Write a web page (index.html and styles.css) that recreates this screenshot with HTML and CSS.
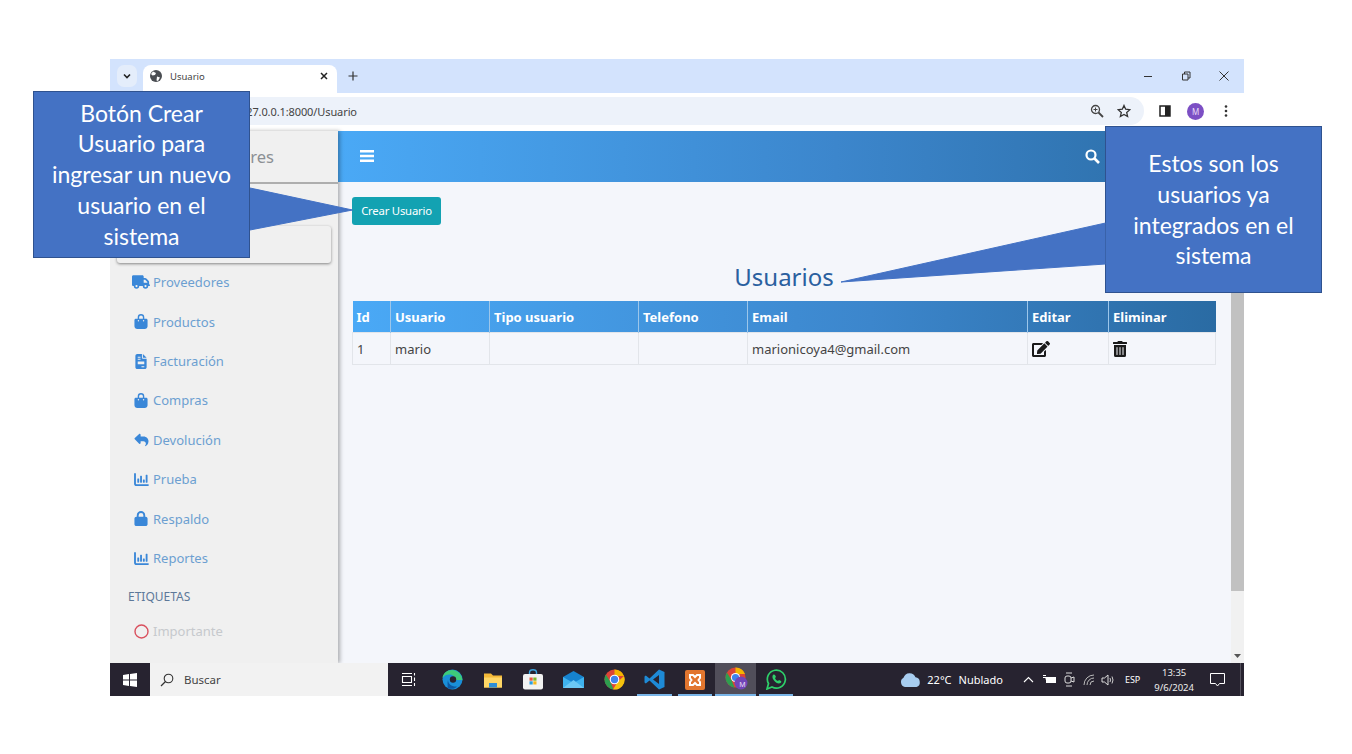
FILE: index.html
```html
<!DOCTYPE html>
<html lang="es">
<head>
<meta charset="utf-8">
<title>Usuario</title>
<link rel="stylesheet" href="styles.css">
</head>
<body>
<div class="window">
  <div class="tabstrip">
    <div class="tab-menu"><svg width="10" height="10" viewBox="0 0 10 10"><path d="M2 3.5 5 6.5 8 3.5" fill="none" stroke="#222" stroke-width="1.6"/></svg></div>
    <div class="tab">
      <svg class="globe" width="12" height="12" viewBox="0 0 12 12"><circle cx="6" cy="6" r="6" fill="#4a4d52"/><path d="M3 1.5 6 3 5 5 2.5 5.5 1 4ZM7 6.5 10 7.5 8 11 6.5 10.5Z" fill="#fff"/></svg>
      <span class="tab-title">Usuario</span>
      <svg class="tab-close" width="8" height="8" viewBox="0 0 8 8"><path d="M1 1 7 7M7 1 1 7" stroke="#222" stroke-width="1.5"/></svg>
    </div>
    <svg class="newtab" width="10" height="10" viewBox="0 0 10 10"><path d="M5 .5V9.500M.5 5H9.500" stroke="#333" stroke-width="1.2"/></svg>
    <div class="winctl">
      <svg width="10" height="10" viewBox="0 0 10 10"><path d="M1 5.500H9" stroke="#333" stroke-width="1"/></svg>
      <svg width="10" height="10" viewBox="0 0 10 10"><path d="M1.500 3H7V9H1.500ZM3.500 3V1H9V7H7" fill="none" stroke="#333" stroke-width="1"/></svg>
      <svg width="10" height="10" viewBox="0 0 10 10"><path d="M.5 .5 9.500 9.500M9.500 .5 .5 9.500" stroke="#333" stroke-width="1"/></svg>
    </div>
  </div>
  <div class="toolbar">
    <div class="omnibox">
      <span class="url">127.0.0.1:8000/Usuario</span>
      <svg class="omni-ico" width="14" height="14" viewBox="0 0 14 14"><circle cx="5.500" cy="5.500" r="4" fill="none" stroke="#444" stroke-width="1.300"/><path d="M8.500 8.500 13 13" stroke="#444" stroke-width="1.800"/><path d="M3.500 5.500H7.500M5.500 3.500V7.500" stroke="#444" stroke-width="1"/></svg>
      <svg class="omni-ico" width="14" height="14" viewBox="0 0 24 24"><path d="M12 2.500 14.900 9 22 9.700 16.600 14.400 18.200 21.500 12 17.800 5.800 21.500 7.400 14.400 2 9.700 9.100 9Z" fill="none" stroke="#333" stroke-width="2.200"/></svg>
    </div>
    <svg class="side-panel" width="12" height="12" viewBox="0 0 12 12"><rect x="1" y="1" width="10" height="10" fill="none" stroke="#222" stroke-width="1.500"/><rect x="6" y="1" width="5" height="10" fill="#222"/></svg>
    <div class="avatar">M</div>
    <svg class="dots" width="4" height="12" viewBox="0 0 4 12"><circle cx="2" cy="1.500" r="1.300" fill="#333"/><circle cx="2" cy="6" r="1.300" fill="#333"/><circle cx="2" cy="10.500" r="1.300" fill="#333"/></svg>
  </div>
  <div class="app">
    <aside class="sidebar">
      <div class="brand">Proveedores</div>
      <nav class="nav">
        <a class="nav-item active"><span class="nav-ico"></span>Usuarios</a>
        <a class="nav-item"><span class="nav-ico"><svg width="18" height="15" viewBox="0 0 640 512"><path fill="#3a87d8" d="M48 0C21 0 0 21 0 48v288c0 27 21 48 48 48h16a96 96 0 0 0 192 0h128a96 96 0 0 0 192 0h32c18 0 32-14 32-32s-14-32-32-32V237c0-17-7-33-19-45l-77-77c-12-12-28-19-45-19h-51V48c0-27-21-48-48-48zm368 160h51l77 77v27H416zM160 344a40 40 0 1 1 0 80 40 40 0 0 1 0-80zm320 0a40 40 0 1 1 0 80 40 40 0 0 1 0-80z"/></svg></span>Proveedores</a>
        <a class="nav-item"><span class="nav-ico"><svg width="14" height="15" viewBox="0 0 448 512"><path fill="#3a87d8" d="M160 112a64 64 0 0 1 128 0v48H160zm-48 48H48c-26 0-48 22-48 48v208c0 53 43 96 96 96h256c53 0 96-43 96-96V208c0-26-22-48-48-48h-64v-48a112 112 0 0 0-224 0zm24 96a24 24 0 1 1 0-48 24 24 0 0 1 0 48zm200-24a24 24 0 1 1-48 0 24 24 0 0 1 48 0z"/></svg></span>Productos</a>
        <a class="nav-item"><span class="nav-ico"><svg width="12" height="15" viewBox="0 0 384 512"><path fill="#3a87d8" d="M64 0C29 0 0 29 0 64v384c0 35 29 64 64 64h256c35 0 64-29 64-64V160H256c-18 0-32-14-32-32V0zm192 0v128h128zM80 96h96v32H80zm0 64h96v32H80zm0 96h224v96H80zm128 160h96v32h-96z"/></svg></span>Facturación</a>
        <a class="nav-item"><span class="nav-ico"><svg width="14" height="15" viewBox="0 0 448 512"><path fill="#3a87d8" d="M160 112a64 64 0 0 1 128 0v48H160zm-48 48H48c-26 0-48 22-48 48v208c0 53 43 96 96 96h256c53 0 96-43 96-96V208c0-26-22-48-48-48h-64v-48a112 112 0 0 0-224 0zm24 96a24 24 0 1 1 0-48 24 24 0 0 1 0 48zm200-24a24 24 0 1 1-48 0 24 24 0 0 1 48 0z"/></svg></span>Compras</a>
        <a class="nav-item"><span class="nav-ico"><svg width="15" height="14" viewBox="0 0 512 512"><path fill="#3a87d8" d="M205 34c11 5 19 16 19 29v65h112c97 0 176 79 176 176 0 113-81 164-100 174-3 1-5 2-8 2-10 0-18-8-18-18 0-7 4-13 9-18 9-9 21-25 21-53 0-49-39-88-88-88h-104v64c0 13-8 24-19 29s-25 3-35-6L11 229C4 223 0 215 0 206s4-17 11-23L170 40c10-9 23-11 35-6z"/></svg></span>Devolución</a>
        <a class="nav-item"><span class="nav-ico"><svg width="15" height="13" viewBox="0 0 512 448"><path fill="#3a87d8" d="M32 0c18 0 32 14 32 32v336c0 9 7 16 16 16h400c18 0 32 14 32 32s-14 32-32 32H80c-44 0-80-36-80-80V32C0 14 14 0 32 0zm96 192h32c9 0 16 7 16 16v112c0 9-7 16-16 16h-32c-9 0-16-7-16-16V208c0-9 7-16 16-16zm96-96h32c9 0 16 7 16 16v208c0 9-7 16-16 16h-32c-9 0-16-7-16-16V112c0-9 7-16 16-16zm96 128h32c9 0 16 7 16 16v80c0 9-7 16-16 16h-32c-9 0-16-7-16-16v-80c0-9 7-16 16-16zm96-160h32c9 0 16 7 16 16v240c0 9-7 16-16 16h-32c-9 0-16-7-16-16V80c0-9 7-16 16-16z"/></svg></span>Prueba</a>
        <a class="nav-item"><span class="nav-ico"><svg width="14" height="15" viewBox="0 0 448 512"><path fill="#3a87d8" d="M144 144v48h160v-48a80 80 0 0 0-160 0zm-64 48v-48a144 144 0 0 1 288 0v48h16c35 0 64 29 64 64v192c0 35-29 64-64 64H64c-35 0-64-29-64-64V256c0-35 29-64 64-64z"/></svg></span>Respaldo</a>
        <a class="nav-item"><span class="nav-ico"><svg width="15" height="13" viewBox="0 0 512 448"><path fill="#3a87d8" d="M32 0c18 0 32 14 32 32v336c0 9 7 16 16 16h400c18 0 32 14 32 32s-14 32-32 32H80c-44 0-80-36-80-80V32C0 14 14 0 32 0zm96 192h32c9 0 16 7 16 16v112c0 9-7 16-16 16h-32c-9 0-16-7-16-16V208c0-9 7-16 16-16zm96-96h32c9 0 16 7 16 16v208c0 9-7 16-16 16h-32c-9 0-16-7-16-16V112c0-9 7-16 16-16zm96 128h32c9 0 16 7 16 16v80c0 9-7 16-16 16h-32c-9 0-16-7-16-16v-80c0-9 7-16 16-16zm96-160h32c9 0 16 7 16 16v240c0 9-7 16-16 16h-32c-9 0-16-7-16-16V80c0-9 7-16 16-16z"/></svg></span>Reportes</a>
        <div class="nav-label">ETIQUETAS</div>
        <a class="nav-item muted"><span class="nav-ico"><svg width="15" height="15" viewBox="0 0 15 15"><circle cx="7.500" cy="7.500" r="6.500" fill="none" stroke="#d9505e" stroke-width="1.400"/></svg></span>Importante</a>
      </nav>
    </aside>
    <main class="main">
      <header class="topbar">
        <svg width="14" height="12" viewBox="0 0 14 12"><path d="M0 0h14v2.500H0zM0 4.700h14v2.500H0zM0 9.400h14v2.500H0z" fill="#fff"/></svg>
        <svg width="15" height="15" viewBox="0 0 15 15"><circle cx="6" cy="6" r="4.500" fill="none" stroke="#fff" stroke-width="2.200"/><path d="M9.500 9.500 14 14" stroke="#fff" stroke-width="2.600"/></svg>
      </header>
      <div class="scrollarea">
        <div class="content">
          <a class="btn-create">Crear Usuario</a>
          <h1 class="page-title">Usuarios</h1>
          <table class="users">
            <colgroup><col class="c-id"><col class="c-user"><col class="c-type"><col class="c-tel"><col class="c-mail"><col class="c-edit"><col class="c-del"></colgroup>
            <thead><tr><th>Id</th><th>Usuario</th><th>Tipo usuario</th><th>Telefono</th><th>Email</th><th>Editar</th><th>Eliminar</th></tr></thead>
            <tbody><tr>
              <td>1</td><td>mario</td><td></td><td></td><td>marionicoya4@gmail.com</td>
              <td><svg width="18" height="16" viewBox="0 0 576 512"><path fill="#1a1a1a" d="M402 83l90 90a10 10 0 0 1 0 14L274 405l-93 10a20 20 0 0 1-22-22l10-93L387 83a10 10 0 0 1 15 0zm162-23-49-49a40 40 0 0 0-56 0l-35 35a10 10 0 0 0 0 14l90 90a10 10 0 0 0 14 0l35-35a40 40 0 0 0 1-55zM384 346v102H64V128h230a12 12 0 0 0 8-4l40-40c8-8 2-20-8-20H48C21 64 0 85 0 112v352c0 27 21 48 48 48h352c27 0 48-21 48-48V306c0-11-13-16-20-9l-40 40a12 12 0 0 0-4 9z"/></svg></td>
              <td><svg width="14" height="16" viewBox="0 0 448 512"><path fill="#1a1a1a" d="M32 464a48 48 0 0 0 48 48h288a48 48 0 0 0 48-48V128H32zm272-256a16 16 0 0 1 32 0v224a16 16 0 0 1-32 0zm-96 0a16 16 0 0 1 32 0v224a16 16 0 0 1-32 0zm-96 0a16 16 0 0 1 32 0v224a16 16 0 0 1-32 0zM432 32H312l-9-19a24 24 0 0 0-22-13H167a24 24 0 0 0-21 13l-9 19H16A16 16 0 0 0 0 48v32a16 16 0 0 0 16 16h416a16 16 0 0 0 16-16V48a16 16 0 0 0-16-16z"/></svg></td>
            </tr></tbody>
          </table>
        </div>
        <div class="scrollbar"><div class="thumb"></div><svg class="arrow" width="7" height="4" viewBox="0 0 7 4"><path d="M0 0h7L3.500 4z" fill="#555"/></svg></div>
      </div>
    </main>
  </div>
  <div class="taskbar">
    <svg class="win-logo" width="14" height="14" viewBox="0 0 14 14"><path fill="#fff" d="M0 2 6 1.100V6.500H0zM7 1 14 0V6.500H7zM0 7.500H6V12.900L0 12zM7 7.500H14V14L7 13Z"/></svg>
    <div class="searchbox"><svg width="14" height="14" viewBox="0 0 14 14"><circle cx="8.500" cy="5.500" r="4.300" fill="none" stroke="#333" stroke-width="1.100"/><path d="M5.500 8.500 1 13" stroke="#333" stroke-width="1.300"/></svg><span>Buscar</span></div>
    <div class="apps">
      <div class="app-ico taskview"><svg width="15" height="15" viewBox="0 0 15 15"><path d="M1 1.500H11M1 13.500H11M1.500 4.500H10.500V10.500H1.500ZM13.500 1V3.500M13.500 5.500V9M13.500 11V14" fill="none" stroke="#fff" stroke-width="1.100"/></svg></div>
      <div class="app-ico"><svg width="21" height="21" viewBox="0 0 21 21"><circle cx="10.500" cy="10.500" r="10" fill="#1a8fd8"/><path d="M20.500 12C20.500 6 16 1 10 1 5 1 1 4 .5 9c2-3 5-4 8-3.500 3 .5 5 3 4 5.500H20z" fill="#3ecb7a"/><path d="M6 11c0 4 4 7 9 6.500-2 2.500-6 3-9.500 1.500C6 17 5 14 6 11z" fill="#0c59a4"/><circle cx="11" cy="10.500" r="3.200" fill="#272330"/></svg></div>
      <div class="app-ico"><svg width="18" height="16" viewBox="0 0 18 16"><path d="M0 1.500H7L9 3.500H18V15.500H0Z" fill="#f4b938"/><path d="M0 5.500H18V15.500H0Z" fill="#ffd766"/><path d="M5 11H13V15.500H5Z" fill="#2f8fd6"/></svg></div>
      <div class="app-ico"><svg width="20" height="21" viewBox="0 0 20 21"><path d="M6.500 5.500V3.500C6.500 1.500 8 .8 10 .8S13.500 1.500 13.500 3.500V5.500" fill="none" stroke="#3ca4e0" stroke-width="1.400"/><rect y="5" width="20" height="15.500" rx="2" fill="#f2f2f2"/><rect x="6.500" y="8.500" width="3.200" height="3.200" fill="#e8563f"/><rect x="10.300" y="8.500" width="3.200" height="3.200" fill="#7cb92c"/><rect x="6.500" y="12.300" width="3.200" height="3.200" fill="#2a9fe0"/><rect x="10.300" y="12.300" width="3.200" height="3.200" fill="#f6b81c"/></svg></div>
      <div class="app-ico"><svg width="21" height="17" viewBox="0 0 21 17"><path d="M0 6 10.500 0 21 6V17H0Z" fill="#1683cf"/><path d="M0 6 10.500 12 21 6V17H0Z" fill="#3fb2ee"/><path d="M0 17 10.500 9 21 17Z" fill="#6cc8f4"/></svg></div>
      <div class="app-ico"><svg width="21" height="21" viewBox="0 0 21 21"><circle cx="10.500" cy="10.500" r="10" fill="#dc4437"/><path d="M10.500 .5A10 10 0 0 1 20 7H10.500Z" fill="#f4b400"/><path d="M20 7A10 10 0 0 1 9 20.400L13.500 13Z" fill="#f4c20d"/><path d="M1.800 5.500 6.500 13 9.500 20.400A10 10 0 0 1 1.800 5.500Z" fill="#2e9e4f"/><circle cx="10.500" cy="10.500" r="4.800" fill="#fff"/><circle cx="10.500" cy="10.500" r="3.700" fill="#3f82ec"/></svg></div>
      <div class="app-ico running"><svg width="21" height="21" viewBox="0 0 21 21"><path d="M15 .5 20.500 3V18L15 20.500 5.500 11.500 1.800 14.500 .5 13.500V7.500L1.800 6.500 5.500 9.500Z" fill="#1e8ad6"/><path d="M15 6 9 10.500 15 15Z" fill="#272330"/></svg></div>
      <div class="app-ico running"><svg width="20" height="20" viewBox="0 0 20 20"><rect width="20" height="20" rx="2" fill="#e2762f"/><path d="M5 5H8L10 7 12 5H15V8L13.500 10 15 12V15H12L10 13 8 15H5V12L6.500 10 5 8Z" fill="none" stroke="#fff" stroke-width="2"/></svg></div>
      <div class="app-ico current"><svg class="chrome-m" width="24" height="24" viewBox="0 0 24 24"><circle cx="10.500" cy="10.500" r="10" fill="#dc4437"/><path d="M10.500 .5A10 10 0 0 1 20 7H10.500Z" fill="#f4b400"/><path d="M1.800 5.500 6.500 13 9.500 20.400A10 10 0 0 1 1.800 5.500Z" fill="#2e9e4f"/><circle cx="10.500" cy="10.500" r="4.600" fill="#fff"/><circle cx="10.500" cy="10.500" r="3.600" fill="#3f82ec"/><circle cx="16" cy="16" r="6.500" fill="#7145b8"/></svg><span class="badge-m">M</span></div>
      <div class="app-ico running"><svg width="21" height="21" viewBox="0 0 21 21"><path d="M1 20 2.500 14.500A9 9 0 1 1 6 18Z" fill="none" stroke="#2ed06a" stroke-width="1.700"/><path d="M7.500 5.500C6 6.500 6 9 8 11.500S12.500 15 14.500 14C15.500 13.500 15.500 12.500 15 12L13 11 12 12C10.500 11.500 9.500 10.500 9 9L10 8 9 6C8.700 5.500 8 5.200 7.500 5.500Z" fill="#2ed06a"/></svg></div>
    </div>
    <div class="tray">
      <svg class="cloud" width="21" height="14" viewBox="0 0 21 13" preserveAspectRatio="none"><path d="M5 13A4.500 4.500 0 0 1 3.500 4.500 6.500 6.500 0 0 1 15.500 4 4.600 4.600 0 0 1 16.500 13Z" fill="#a8cdf0"/></svg>
      <span class="temp">22°C</span>
      <span class="cond">Nublado</span>
      <svg class="t-caret" width="11" height="7" viewBox="0 0 11 7"><path d="M1 6 5.500 1.500 10 6" fill="none" stroke="#fff" stroke-width="1.100"/></svg>
      <svg class="t-batt" width="14" height="11" viewBox="0 0 14 11"><rect x="4" y="3" width="10" height="6" fill="#fff"/><path d="M1 1.500H4M1 3.500H4V5.500" fill="none" stroke="#fff"/></svg>
      <svg class="t-cam" width="12" height="15" viewBox="0 0 12 15"><path d="M3 1H9M3 14H9" stroke="#ddd"/><rect x="2" y="4" width="6" height="7" rx="2" fill="none" stroke="#ddd"/><path d="M8 6 11 5V10L8 9" fill="none" stroke="#ddd"/></svg>
      <svg class="t-wifi" width="13" height="12" viewBox="0 0 13 12"><path d="M1 11A10 10 0 0 1 11 1M4 11A7 7 0 0 1 11 4M7 11A4 4 0 0 1 11 7" fill="none" stroke="#bbb"/></svg>
      <svg class="t-vol" width="14" height="12" viewBox="0 0 14 12"><path d="M1 4H3.500L7 1V11L3.500 8H1Z" fill="none" stroke="#ddd"/><path d="M9 4Q10 6 9 8M11 2.500Q13 6 11 9.500" fill="none" stroke="#ccc"/></svg>
      <span class="lang">ESP</span>
      <span class="clock"><span>13:35</span><span>9/6/2024</span></span>
      <svg class="notif" width="15" height="14" viewBox="0 0 15 14"><path d="M.5 .5H14.500V10.500H9.500L7.500 13 5.500 10.500H.5Z" fill="none" stroke="#fff"/></svg>
      <span class="show-desktop"></span>
    </div>
  </div>
</div>

<div class="callout callout-left">Botón Crear Usuario para ingresar un nuevo usuario en el sistema</div>
<div class="callout callout-right">Estos son los usuarios ya integrados en el sistema</div>
<svg class="tails" width="1352" height="754" viewBox="0 0 1352 754">
  <path d="M250 188 352.500 210 250 230" fill="#4472c4" stroke="#4472c4"/>
  <path d="M1105.500 223 841 282 1105.500 264" fill="#4472c4" stroke="#4472c4"/>
</svg>
</body>
</html>
```

FILE: styles.css
```css
* { box-sizing: border-box; }
html, body { margin: 0; padding: 0; background: #fff; overflow: hidden; }
body { width: 1352px; height: 754px; font-family: "Noto Sans", sans-serif; position: relative; }

.window { width: 1134px; height: 637px; margin: 59px 0 0 110px; display: flex; flex-direction: column; overflow: hidden; background: #fff; }

.tabstrip { height: 34px; background: #d3e3fd; display: flex; align-items: flex-end; padding-left: 7px; flex: none; }
.tab-menu { width: 20px; height: 22px; margin-bottom: 6px; border-radius: 7px; background: #e4edfb; display: flex; align-items: center; justify-content: center; }
.tab { width: 194px; height: 28px; margin-left: 6px; background: #fff; border-radius: 8px 8px 0 0; display: flex; align-items: center; padding: 0 9px 6px 7px; }
.tab-title { font-size: 9.500px; color: #444; margin-left: 8px; flex: 1; }
.newtab { margin: 0 0 12px 11px; }
.winctl { margin-left: auto; display: flex; gap: 28px; padding-right: 15px; margin-bottom: 12px; }

.toolbar { height: 38px; background: #fff; display: flex; align-items: center; padding: 0 16px 2px 0; flex: none; }
.omnibox { width: 1035px; height: 28px; background: #edf2fa; border-radius: 0 14px 14px 0; display: flex; align-items: center; padding: 0 13px 0 130px; gap: 13px; }
.url { font-size: 11px; color: #444; margin-right: auto; letter-spacing: -.1px; }
.side-panel { margin-left: 15px; }
.avatar { width: 17px; height: 17px; border-radius: 50%; background: #7c4fc4; color: #e7dcf7; font-size: 8px; display: flex; align-items: center; justify-content: center; margin-left: 16px; }
.dots { margin-left: 20px; }

.app { flex: 1; display: flex; min-height: 0; }
.sidebar { width: 228px; flex: none; background: #f0f0f0; box-shadow: 2px 0 4px rgba(0,0,0,.3); z-index: 1; overflow: hidden; }
.brand { height: 53px; border-bottom: 2px solid #aeaeae; font-size: 16.500px; color: #8b8f94; display: flex; align-items: center; justify-content: flex-end; padding: 0 64px 0 0; }
.nav { padding: 42px 7px 0; display: flex; flex-direction: column; }
.nav-item { height: 39.430px; display: flex; align-items: center; font-size: 13px; color: #6c9fd1; flex: none; }
.nav-item.active { height: 36.500px; background: #f0f0f0; border-radius: 3px; box-shadow: 0 1px 3px rgba(0,0,0,.45); }
.nav-item.muted { color: #c6c9cd; height: 35px; }
.nav-ico { width: 36px; padding-left: 12px; flex: none; display: flex; justify-content: center; align-items: center; }
.nav-label { height: 36px; display: flex; align-items: center; font-size: 12px; color: #5d7899; padding: 1px 0 0 11px; }

.main { flex: 1; min-width: 0; display: flex; flex-direction: column; background: #f4f6fb; }
.topbar { height: 51px; flex: none; background: linear-gradient(90deg, #4aa9f6 0%, #3c86cc 55%, #2a6ba3 100%); display: flex; align-items: center; justify-content: space-between; padding: 0 144px 1px 22px; }
.scrollarea { flex: 1; display: flex; min-height: 0; }
.content { flex: 1; min-width: 0; padding: 15px 15px 0 14px; display: flex; flex-direction: column; align-items: flex-start; }
.btn-create { width: 89px; height: 28px; background: #13a2b2; color: #fff; font-size: 11.300px; border-radius: 3px; display: flex; align-items: center; justify-content: center; letter-spacing: -.2px; padding-bottom: 1px; }
.page-title { align-self: stretch; margin: 35px 0 8px; text-align: center; font-size: 24px; font-weight: 400; line-height: 33px; color: #2a609f; }

.users { width: 863px; table-layout: fixed; border-collapse: collapse; font-size: 13px; }
.c-id { width: 38px; } .c-user { width: 99px; } .c-type { width: 149px; } .c-tel { width: 109px; } .c-mail { width: 280px; } .c-edit { width: 81px; } .c-del { width: 107px; }
.users thead tr { background: linear-gradient(90deg, #4aa9f6 0%, #3c86cc 60%, #2a6ba3 100%); }
.users th { height: 31px; padding: 1px 4px 0; color: #fff; text-align: left; font-weight: 700; font-size: 13px; border: 1px solid #9cc6ea; border-top: 0; border-bottom: 0; }
.users th:first-child { border-left: 0; } .users th:last-child { border-right: 0; }
.users td { height: 32px; padding: 2px 4px 0; color: #444; border: 1px solid #e2e5ea; }
.users td svg { display: block; }

.scrollbar { width: 13px; flex: none; background: #f1f1f1; display: flex; flex-direction: column; align-items: center; }
.thumb { width: 13px; height: 409px; background: #c1c1c1; flex: none; }
.arrow { margin-top: auto; margin-bottom: 5px; }

.taskbar { height: 33px; flex: none; background: #272330; display: flex; align-items: center; position: relative; z-index: 2; }
.win-logo { margin-left: 13px; margin-right: 13px; }
.searchbox { width: 238px; height: 33px; background: #f2f2f2; display: flex; align-items: center; gap: 10px; padding-left: 10px; font-size: 11.500px; color: #444; }
.apps { display: flex; height: 33px; }
.app-ico { width: 40.500px; height: 33px; display: flex; align-items: center; justify-content: center; position: relative; }
.app-ico.taskview { width: 43.750px; padding-right: 3.750px; }
.app-ico.running::after { content: ""; position: absolute; left: 3px; right: 3px; bottom: 0; height: 2px; background: #79b5e8; }
.app-ico.current { background: #514e5a; border-bottom: 2px solid #79b5e8; }
.chrome-m { margin-left: 3px; }
.badge-m { position: absolute; left: 24px; top: 17px; font-size: 7px; color: #e6dcf5; }

.tray { margin-left: auto; display: flex; align-items: center; color: #fff; font-size: 11px; height: 33px; padding-right: 3px; }
.cloud { margin-right: 6px; }
.cond { margin-left: 7px; margin-right: 20px; }
.t-batt { margin-left: 8px; }
.t-cam { margin-left: 7px; }
.t-wifi { margin-left: 8px; }
.t-vol { margin-left: 5px; }
.lang { font-size: 9px; margin: 0 14px 0 10px; }
.clock { display: flex; flex-direction: column; align-items: center; font-size: 9.500px; line-height: 15px; margin-right: 16px; color: #eee; }
.show-desktop { width: 1px; height: 33px; background: #55525e; margin-left: 15px; }

.callout { position: absolute; z-index: 5; width: 217px; height: 167px; background: #4472c4; border: 1px solid #2f528f; color: #fff; font-family: Lato, sans-serif; font-size: 23px; line-height: 30.700px; text-align: center; display: flex; align-items: center; justify-content: center; padding: 0 12px; }
.callout-left { left: 33px; top: 91px; }
.callout-right { left: 1105px; top: 126px; }
.tails { position: absolute; left: 0; top: 0; z-index: 6; pointer-events: none; }
```
